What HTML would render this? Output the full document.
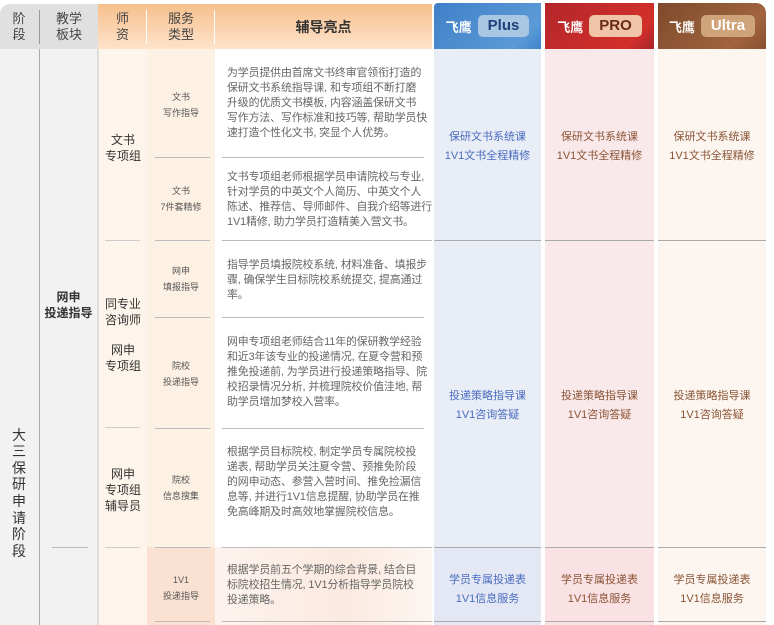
<!DOCTYPE html>
<html><head><meta charset="utf-8"><style>
*{margin:0;padding:0;box-sizing:border-box}
body{width:774px;height:625px;background:#fff;font-family:"Liberation Sans","Noto Sans CJK SC",sans-serif;position:relative;overflow:hidden;color:#555}
.a{position:absolute}
.c{display:flex;align-items:center;justify-content:center;text-align:center}
.hl{font-size:10.9px;line-height:15px;color:#666;letter-spacing:-0.1px;white-space:nowrap}
.sv{font-size:9px;line-height:16px;color:#555}
.tl{width:100%;text-align:center;font-size:11px;line-height:19px}
.ln{position:absolute;height:1px;background:#bbb}
.bd{font-weight:bold;font-size:15px;padding:2px 10px;border-radius:5px;line-height:18px}
</style></head><body>
<div class="a" style="left:0;top:4px;width:98px;height:45px;background:#e0e0e0;border-top-left-radius:10px"></div>
<div class="a c" style="left:0;top:4px;width:38px;height:45px;font-size:13px;line-height:16px;color:#444">阶<br>段</div>
<div class="a" style="left:39px;top:10px;width:1px;height:34px;background:#999"></div>
<div class="a c" style="left:40px;top:4px;width:58px;height:45px;font-size:13px;line-height:16px;color:#444">教学<br>板块</div>
<div class="a" style="left:98px;top:4px;width:334px;height:45px;background:linear-gradient(#f7bf8c,#fde3cb)"></div>
<div class="a c" style="left:98px;top:4px;width:49px;height:45px;font-size:13px;line-height:16px;color:#444">师<br>资</div>
<div class="a" style="left:146px;top:10px;width:1px;height:34px;background:#fff"></div>
<div class="a c" style="left:147px;top:4px;width:68px;height:45px;font-size:13px;line-height:16px;color:#444">服务<br>类型</div>
<div class="a" style="left:214px;top:10px;width:1px;height:34px;background:#fff"></div>
<div class="a c" style="left:215px;top:4px;width:217px;height:45px;font-size:14px;font-weight:bold;color:#333">辅导亮点</div>
<div class="a c" style="left:434px;top:3px;width:107px;height:46px;background:linear-gradient(135deg,#3f7fc8,#5b9ad6 80%,#3f85cc);border-top-left-radius:4px">
<span style="color:#fff;font-weight:bold;font-size:13px;margin-right:6px">飞鹰</span><span class="bd" style="background:#a9c6e2;color:#1f3f7a">Plus</span></div>
<div class="a c" style="left:545px;top:3px;width:109px;height:46px;background:linear-gradient(135deg,#b4262a,#d2302a 80%,#a8242c)">
<span style="color:#fff;font-weight:bold;font-size:13px;margin-right:6px">飞鹰</span><span class="bd" style="background:#f0c4a8;color:#6a2a1a">PRO</span></div>
<div class="a c" style="left:658px;top:3px;width:108px;height:46px;background:linear-gradient(135deg,#7e4a2c,#a0643e 75%,#8a5030);border-top-right-radius:10px">
<span style="color:#fff;font-weight:bold;font-size:13px;margin-right:6px">飞鹰</span><span class="bd" style="background:#cfa47a;color:#fff">Ultra</span></div>
<div class="a" style="left:0;top:49px;width:98px;height:576px;background:#f2f2f2"></div>
<div class="a" style="left:39px;top:49px;width:1px;height:576px;background:#aaa"></div>
<div class="a" style="left:97px;top:49px;width:2px;height:576px;background:#ddd"></div>
<div class="a" style="left:99px;top:49px;width:48px;height:576px;background:#fdf5ec"></div>
<div class="a" style="left:147px;top:49px;width:68px;height:576px;background:#fdf1e4"></div>
<div class="a" style="left:147px;top:547px;width:68px;height:78px;background:#fbe1d2"></div>
<div class="a" style="left:215px;top:547px;width:217px;height:78px;background:linear-gradient(90deg,#fdf3ee,#fbeae0 60%,#fdf6f2)"></div>
<div class="a" style="left:434px;top:49px;width:107px;height:576px;background:#e9edf6"></div>
<div class="a" style="left:434px;top:547px;width:107px;height:78px;background:#e4e8f4"></div>
<div class="a" style="left:545px;top:49px;width:109px;height:576px;background:#fae9ea"></div>
<div class="a" style="left:545px;top:547px;width:109px;height:78px;background:#fae1e3"></div>
<div class="a" style="left:658px;top:49px;width:108px;height:576px;background:#fdf6f0"></div>
<div class="a c" style="left:0;top:418px;width:38px;height:150px;font-size:14px;line-height:16.6px;color:#333">大<br>三<br>保<br>研<br>申<br>请<br>阶<br>段</div>
<div class="a c" style="left:40px;top:285px;width:57px;height:40px;font-size:12px;line-height:16px;font-weight:bold;color:#333">网申<br>投递指导</div>
<div class="ln" style="left:52px;top:547px;width:36px"></div>
<div class="a c" style="left:99px;top:130px;width:48px;height:36px;font-size:12px;line-height:16px;color:#333">文书<br>专项组</div>
<div class="ln" style="left:105px;top:240px;width:35px;background:#ccc"></div>
<div class="a c" style="left:99px;top:294px;width:48px;height:36px;font-size:12px;line-height:16px;color:#333">同专业<br>咨询师</div>
<div class="a c" style="left:99px;top:340px;width:48px;height:36px;font-size:12px;line-height:16px;color:#333">网申<br>专项组</div>
<div class="ln" style="left:105px;top:427px;width:35px;background:#ccc"></div>
<div class="a c" style="left:99px;top:464px;width:48px;height:52px;font-size:12px;line-height:16px;color:#333">网申<br>专项组<br>辅导员</div>
<div class="ln" style="left:105px;top:547px;width:35px;background:#ccc"></div>
<div class="a c sv" style="left:147px;top:88px;width:68px;height:34px">文书<br>写作指导</div>
<div class="ln" style="left:155px;top:157px;width:55px"></div>
<div class="a c sv" style="left:147px;top:182px;width:68px;height:34px">文书<br>7件套精修</div>
<div class="ln" style="left:155px;top:240px;width:55px"></div>
<div class="a c sv" style="left:147px;top:262px;width:68px;height:34px">网申<br>填报指导</div>
<div class="ln" style="left:155px;top:317px;width:55px"></div>
<div class="a c sv" style="left:147px;top:357px;width:68px;height:34px">院校<br>投递指导</div>
<div class="ln" style="left:155px;top:428px;width:55px"></div>
<div class="a c sv" style="left:147px;top:471px;width:68px;height:34px">院校<br>信息搜集</div>
<div class="ln" style="left:155px;top:547px;width:55px"></div>
<div class="a c sv" style="left:147px;top:571px;width:68px;height:34px">1V1<br>投递指导</div>
<div class="ln" style="left:155px;top:621px;width:55px"></div>
<div class="a hl" style="left:227px;top:66px">为学员提供由首席文书终审官领衔打造的<br>保研文书系统指导课, 和专项组不断打磨<br>升级的优质文书模板, 内容涵盖保研文书<br>写作方法、写作标准和技巧等, 帮助学员快<br>速打造个性化文书, 突显个人优势。</div>
<div class="ln" style="left:222px;top:157px;width:202px"></div>
<div class="a hl" style="left:227px;top:170px">文书专项组老师根据学员申请院校与专业,<br>针对学员的中英文个人简历、中英文个人<br>陈述、推荐信、导师邮件、自我介绍等进行<br>1V1精修, 助力学员打造精美入营文书。</div>
<div class="ln" style="left:222px;top:240px;width:210px"></div>
<div class="a hl" style="left:227px;top:258px">指导学员填报院校系统, 材料准备、填报步<br>骤, 确保学生目标院校系统提交, 提高通过<br>率。</div>
<div class="ln" style="left:222px;top:317px;width:202px"></div>
<div class="a hl" style="left:227px;top:335px">网申专项组老师结合11年的保研教学经验<br>和近3年该专业的投递情况, 在夏令营和预<br>推免投递前, 为学员进行投递策略指导、院<br>校招录情况分析, 并梳理院校价值洼地, 帮<br>助学员增加梦校入营率。</div>
<div class="ln" style="left:222px;top:428px;width:202px"></div>
<div class="a hl" style="left:227px;top:445px">根据学员目标院校, 制定学员专属院校投<br>递表, 帮助学员关注夏令营、预推免阶段<br>的网申动态、参营入营时间、推免捡漏信<br>息等, 并进行1V1信息提醒, 协助学员在推<br>免高峰期及时高效地掌握院校信息。</div>
<div class="ln" style="left:222px;top:547px;width:210px"></div>
<div class="a hl" style="left:227px;top:563px">根据学员前五个学期的综合背景, 结合目<br>标院校招生情况, 1V1分析指导学员院校<br>投递策略。</div>
<div class="ln" style="left:222px;top:621px;width:210px"></div>
<div class="a" style="left:434px;top:128px;width:107px"><div class="tl" style="color:#4a6cc0">保研文书系统课<br>1V1文书全程精修</div></div>
<div class="a" style="left:545px;top:128px;width:109px"><div class="tl" style="color:#8a5436">保研文书系统课<br>1V1文书全程精修</div></div>
<div class="a" style="left:658px;top:128px;width:108px"><div class="tl" style="color:#8a5436">保研文书系统课<br>1V1文书全程精修</div></div>
<div class="ln" style="left:434px;top:240px;width:107px;background:#aaa"></div>
<div class="ln" style="left:545px;top:240px;width:109px;background:#aaa"></div>
<div class="ln" style="left:658px;top:240px;width:108px;background:#aaa"></div>
<div class="a" style="left:434px;top:387px;width:107px"><div class="tl" style="color:#4a6cc0">投递策略指导课<br>1V1咨询答疑</div></div>
<div class="a" style="left:545px;top:387px;width:109px"><div class="tl" style="color:#8a5436">投递策略指导课<br>1V1咨询答疑</div></div>
<div class="a" style="left:658px;top:387px;width:108px"><div class="tl" style="color:#8a5436">投递策略指导课<br>1V1咨询答疑</div></div>
<div class="ln" style="left:434px;top:547px;width:107px;background:#aaa"></div>
<div class="ln" style="left:545px;top:547px;width:109px;background:#aaa"></div>
<div class="ln" style="left:658px;top:547px;width:108px;background:#aaa"></div>
<div class="a" style="left:434px;top:571px;width:107px"><div class="tl" style="color:#4a6cc0">学员专属投递表<br>1V1信息服务</div></div>
<div class="a" style="left:545px;top:571px;width:109px"><div class="tl" style="color:#8a5436">学员专属投递表<br>1V1信息服务</div></div>
<div class="a" style="left:658px;top:571px;width:108px"><div class="tl" style="color:#8a5436">学员专属投递表<br>1V1信息服务</div></div>
<div class="ln" style="left:434px;top:621px;width:107px;background:#aaa"></div>
<div class="ln" style="left:545px;top:621px;width:109px;background:#aaa"></div>
<div class="ln" style="left:658px;top:621px;width:108px;background:#aaa"></div>
</body></html>
